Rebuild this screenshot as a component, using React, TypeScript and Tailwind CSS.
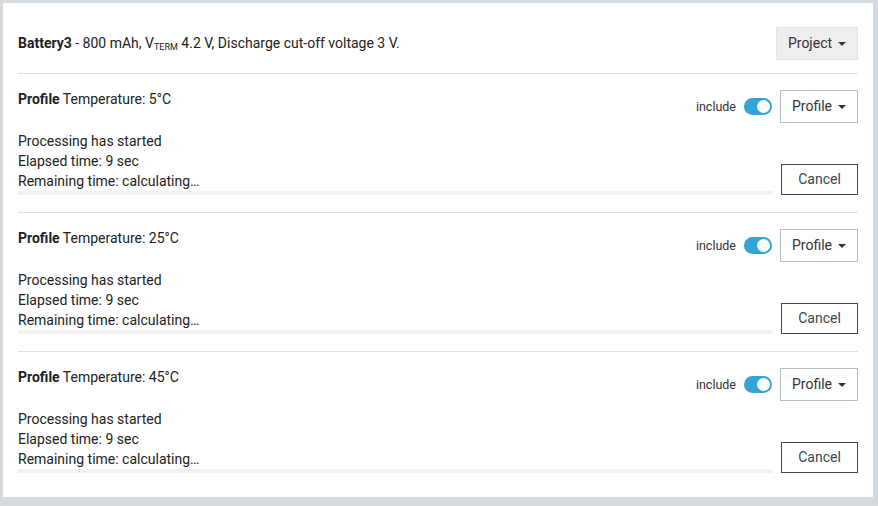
import React from "react";

const profiles = ["5°C", "25°C", "45°C"];

function Caret() {
  return <span className="ml-[6px] inline-block h-0 w-0 border-x-[4px] border-t-[4px] border-x-transparent border-t-[#333] align-middle" />;
}

function Toggle() {
  return (
    <div className="flex h-[17px] w-[28px] items-center justify-end rounded-full bg-[#35a3d3] px-[2px]">
      <div className="h-[13px] w-[13px] rounded-full bg-white" />
    </div>
  );
}

function ProfileSection({ temp, last }: { temp: string; last?: boolean }) {
  return (
    <div className={`pt-4 pb-[17px] ${last ? "" : "border-b border-[#e0e0e0]"}`}>
      <div className="flex items-start justify-between">
        <div className="-mt-px leading-5">
          <span className="font-bold">Profile</span> Temperature: {temp}
        </div>
        <div className="flex items-center">
          <span className="mr-2 pt-px text-[12.5px] text-[#333]">include</span>
          <Toggle />
          <button
            type="button"
            className="ml-2 flex h-[33px] w-[78px] items-center justify-center border border-[#b0bec5] bg-white text-[14px] text-[#333]"
          >
            Profile
            <Caret />
          </button>
        </div>
      </div>
      <div className="mt-2 flex items-end">
        <div className="flex-1">
          <div className="leading-5">Processing has started</div>
          <div className="leading-5">Elapsed time: 9 sec</div>
          <div className="leading-5">Remaining time: calculating…</div>
          <div className="mr-[9px] h-[4px] bg-[#f2f2f2]" />
        </div>
        <button
          type="button"
          className="h-[31px] w-[77px] border border-[#3d4a52] bg-white text-[14px] text-[#37474f]"
        >
          Cancel
        </button>
      </div>
    </div>
  );
}

export default function App() {
  return (
    <div
      className="h-[506px] w-[878px] bg-[#d4dade] pt-[3px] pl-[3px]"
      style={{ fontFamily: "Roboto, 'Liberation Sans', sans-serif" }}
    >
      <div className="h-[494px] w-[870px] bg-white px-[15px] text-[14px] text-[#222]">
        <div className="flex items-center justify-between border-b border-[#e0e0e0] pt-6 pb-[13px]">
          <div>
            <span className="font-bold">Battery3</span> - 800 mAh, V
            <sub className="text-[9px]">TERM</sub> 4.2 V, Discharge cut-off voltage 3 V.
          </div>
          <button
            type="button"
            className="flex h-[33px] w-[82px] items-center justify-center border border-[#e3e3e3] bg-[#eeeeee] text-[14px] text-[#333]"
          >
            Project
            <Caret />
          </button>
        </div>
        {profiles.map((t, i) => (
          <ProfileSection key={t} temp={t} last={i === profiles.length - 1} />
        ))}
      </div>
    </div>
  );
}
